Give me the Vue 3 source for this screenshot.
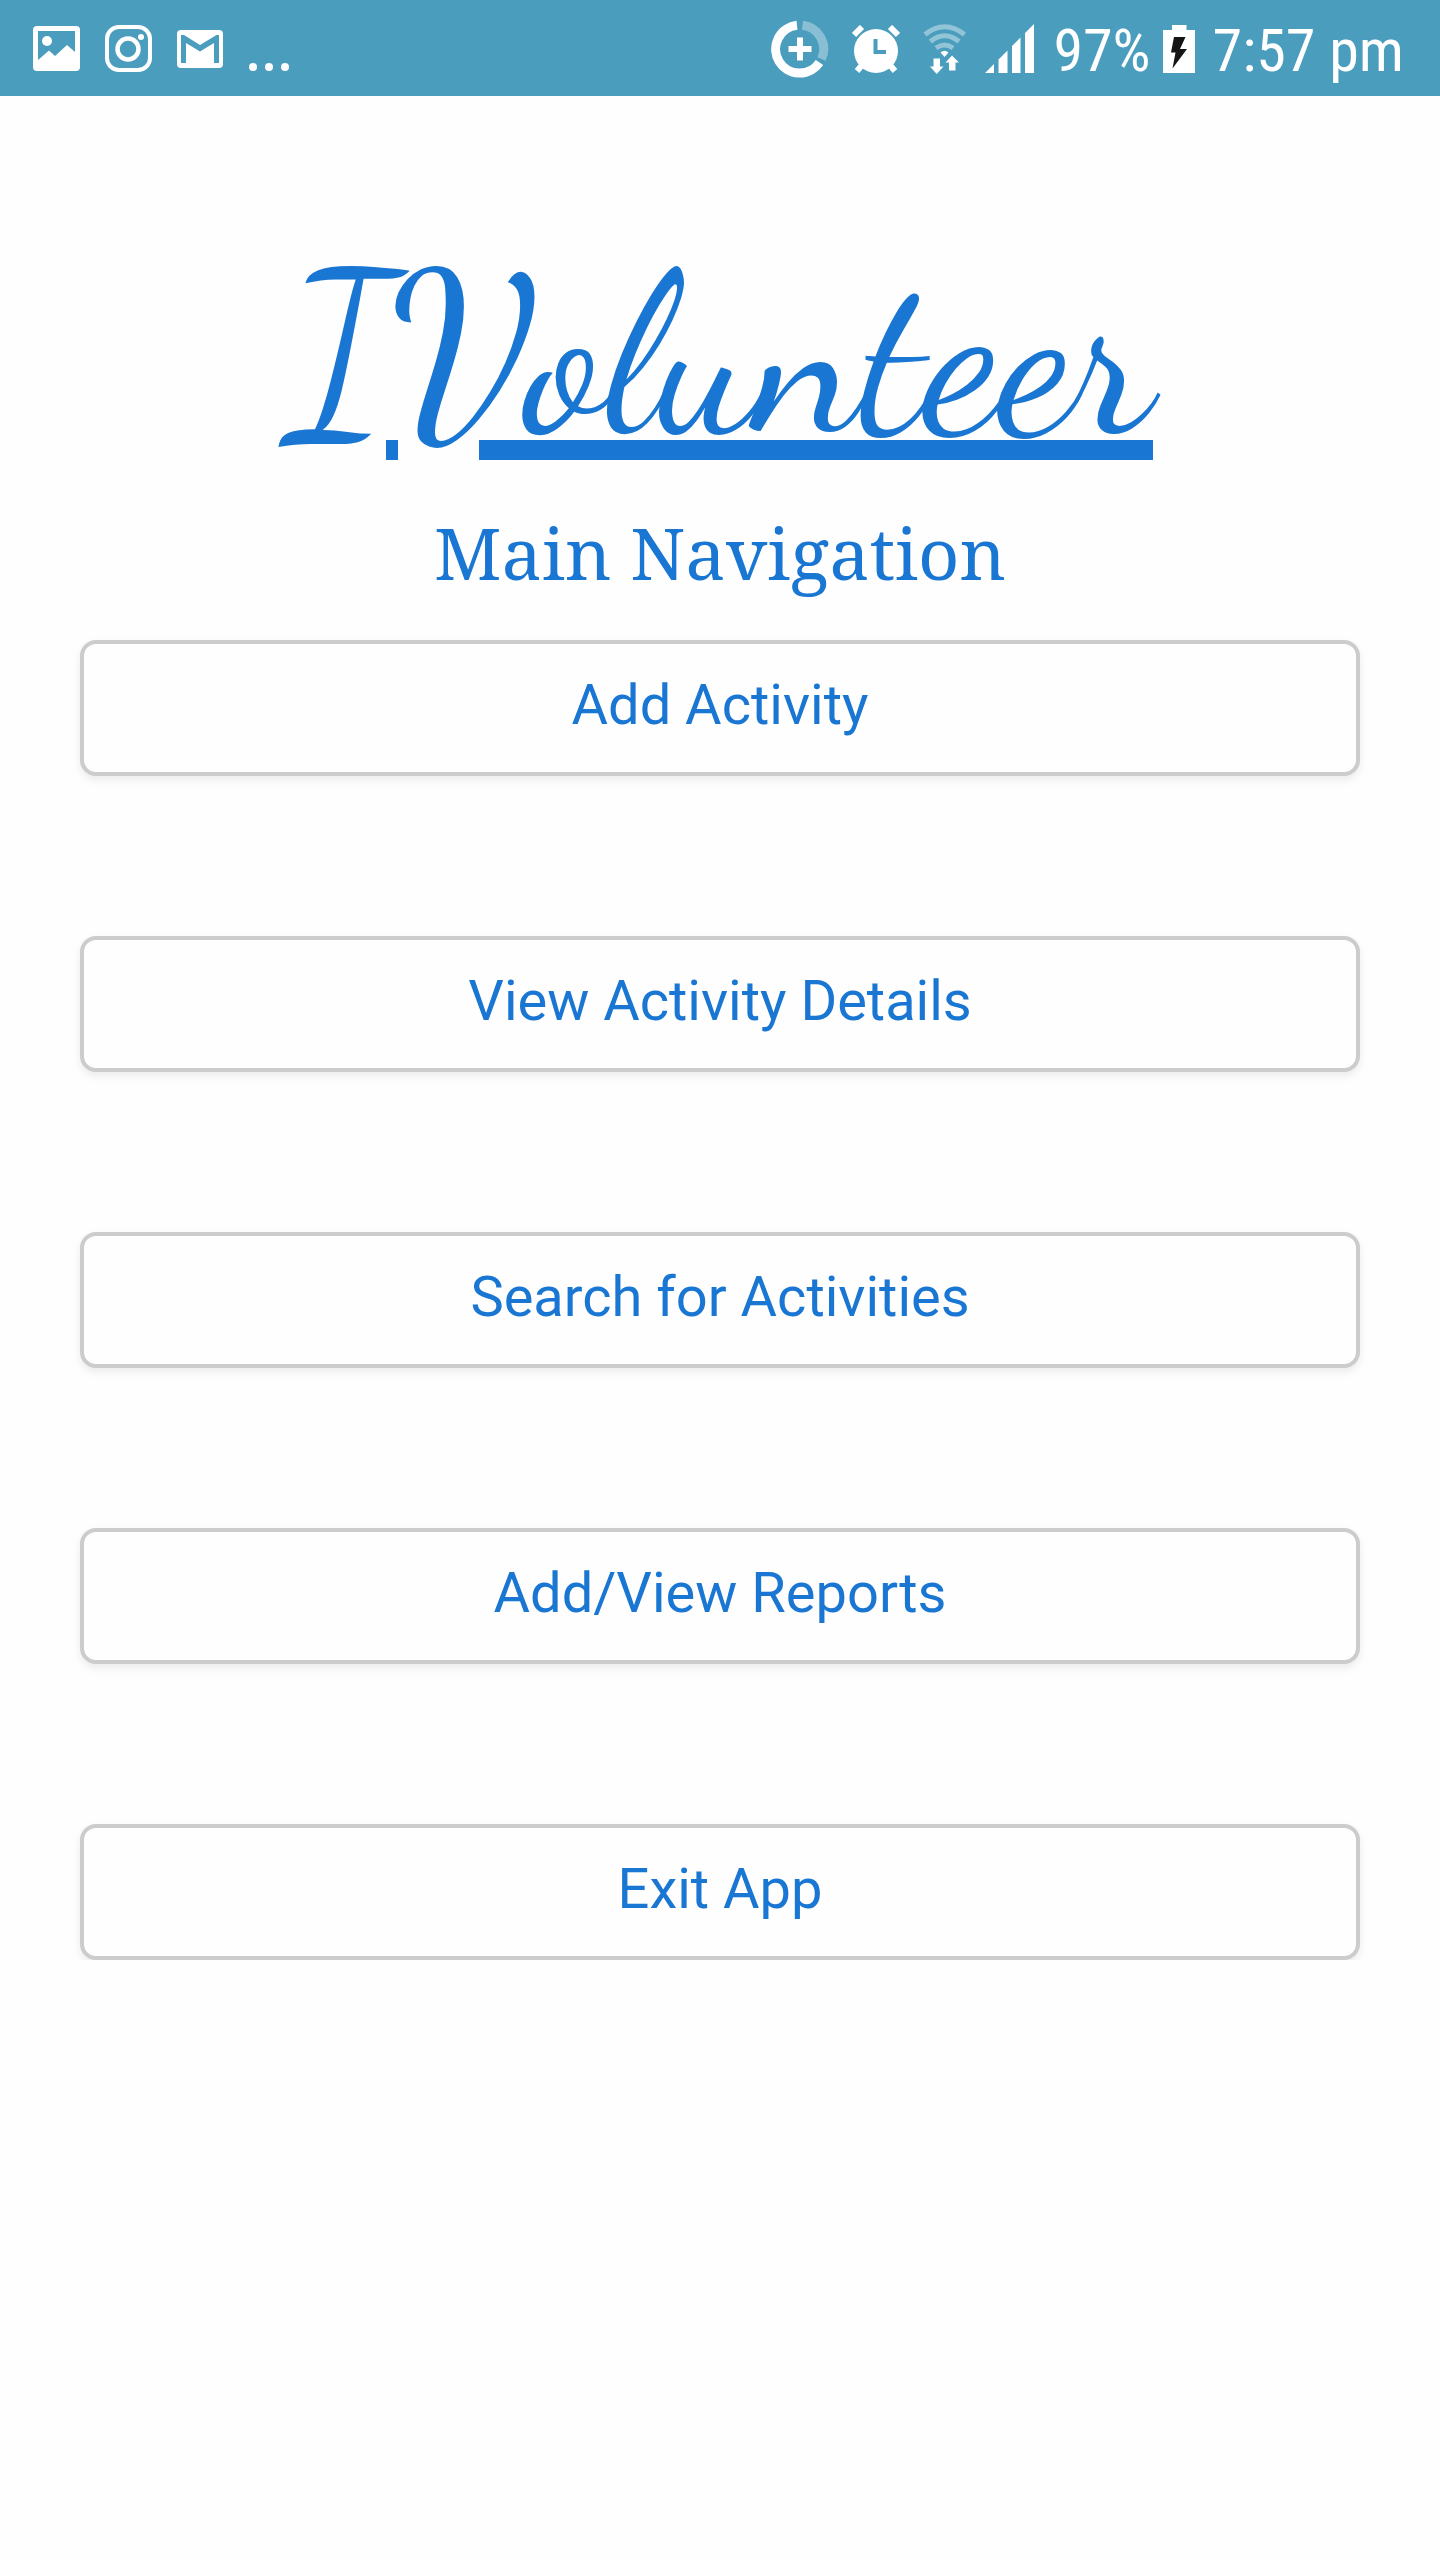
<script setup>
const actions = [
  'Add Activity',
  'View Activity Details',
  'Search for Activities',
  'Add/View Reports',
  'Exit App',
]
</script>

<template>
  <div class="screen">
    <header class="status">
      <div class="group notices">
        <svg class="icon" width="48" height="46" viewBox="0 0 48 46" aria-label="Picture saved">
          <path fill="#fff" fill-rule="evenodd" d="M4 0H43Q47 0 47 4V41Q47 45 43 45H4Q0 45 0 41V4Q0 0 4 0ZM5 5V34L16 24.5L22 30L34 19L42 26V5Z" />
          <circle cx="14" cy="15" r="5" fill="#fff" />
        </svg>
        <svg class="icon" width="48" height="48" viewBox="0 0 48 48" fill="none" stroke="#fff" aria-label="Instagram">
          <rect x="2" y="2" width="43" height="43" rx="12" stroke-width="4" />
          <circle cx="23" cy="24" r="10.5" stroke-width="4.5" />
          <circle cx="36" cy="12" r="3" fill="#fff" stroke="none" />
        </svg>
        <svg class="icon" width="48" height="38" viewBox="0 0 48 38" aria-label="Mail">
          <path fill="#fff" fill-rule="evenodd" d="M4 0H42Q46 0 46 4V34Q46 38 42 38H4Q0 38 0 34V4Q0 0 4 0ZM4 5V33H9V13L23 21.5L37 13V33H42V5H39.5L23 15L7 5Z" />
        </svg>
        <svg class="icon dots" width="40" height="8" viewBox="0 0 40 8" fill="#fff" aria-label="More notifications">
          <circle cx="4" cy="4" r="4" /><circle cx="20" cy="4" r="4" /><circle cx="36" cy="4" r="4" />
        </svg>
      </div>
      <div class="group system">
        <div class="group radios">
          <svg class="icon" width="58" height="58" viewBox="0 0 58 58" fill="none" stroke="#fff" stroke-width="9" aria-label="Data saver">
            <path d="M26 5.2A24 24 0 1 0 48.5 42.5" />
            <path d="M31.5 5.2A24 24 0 0 1 50.5 39" opacity=".35" />
            <path stroke-width="6" d="M17.5 29H40.5M29 17.5V40.5" />
          </svg>
          <svg class="icon" width="48" height="48" viewBox="0 0 48 48" aria-label="Alarm">
            <circle cx="24" cy="26" r="22" fill="#fff" />
            <path stroke="#fff" stroke-width="6" fill="none" d="M2 10L10 2M38 2L46 10M11 39L5 46M37 39L43 46" />
            <path stroke="#4a9dbd" stroke-width="4" fill="none" d="M23.5 14V27H34" />
          </svg>
          <svg class="icon" width="44" height="50" viewBox="0 0 44 50" fill="none" stroke="#fff" aria-label="Wi-Fi">
            <g opacity=".4" stroke-width="5">
              <path d="M2 10.5Q21.5 -5 41.5 10.5" />
              <path d="M7.5 17.5Q21.5 6 36 17.5" />
              <path d="M13 24Q21.5 18 30 24" />
            </g>
            <path fill="#fff" stroke="none" d="M17.5 28.5Q21.5 25 25.5 28.5L21.5 33ZM10.5 34.5H17V42.5H20.5L13.7 50L7 42.5H10.5ZM26 46.5H32.5V38.5H36L29 31.5L22.5 38.5H26Z" />
          </svg>
        </div>
        <svg class="icon" width="50" height="50" viewBox="0 0 50 50" fill="#fff" aria-label="Signal">
          <path d="M0 49L9 40V49ZM13.5 35.5L22.5 26.5V49H13.5ZM27 22L35.5 13.5V49H27ZM40 9L49 0V49H40Z" />
        </svg>
        <div class="group battery">
          <span class="text">97%</span>
          <svg class="icon" width="32" height="50" viewBox="0 0 32 50" aria-label="Charging">
            <path fill="#fff" d="M9 1H23.5V6H32V49H0V6H9Z" />
            <path fill="#151515" d="M11 13H22.5L17 25H24L9.5 44.5L12.5 28.5H8Z" />
          </svg>
        </div>
        <time class="text">7:57 pm</time>
      </div>
    </header>
    <main class="content">
      <div class="brand">
        <h1 class="name">IVolunteer</h1>
        <div class="underline"><span class="tick"></span><span class="line"></span></div>
      </div>
      <h2 class="heading">Main Navigation</h2>
      <nav class="menu" aria-label="Main Navigation">
        <button v-for="action in actions" :key="action" class="action" type="button">{{ action }}</button>
      </nav>
    </main>
  </div>
</template>

<style>
body {
  margin: 0;
  background: #fefefe;
}
</style>

<style scoped>
.screen {
  color: #1976d2;
  font-family: Roboto, sans-serif;
}
.status {
  height: 96px;
  padding: 2px 36px 0 33px;
  box-sizing: border-box;
  display: flex;
  justify-content: space-between;
  align-items: center;
  background: #4a9dbd;
  color: #fff;
  font: 400 60px/70px "Roboto Condensed", "Liberation Sans Narrow", Roboto, sans-serif;
}
.group {
  display: flex;
  align-items: center;
}
.icon {
  flex: none;
}
.notices {
  gap: 24px;
}
.dots {
  margin-top: 36px;
}
.system {
  gap: 18px;
}
.radios {
  gap: 23px;
}
.battery {
  gap: 12px;
}
.text {
  padding-top: 4px;
}
.content {
  padding: 178px 80px 0;
}
.brand {
  width: fit-content;
  margin: 0 auto;
}
.name {
  margin: 0;
  font: 400 224px/166px "Dancing Script", cursive;
}
.underline {
  display: flex;
  gap: 81px;
  height: 20px;
  padding-left: 99px;
}
.tick {
  width: 12px;
  background: currentColor;
}
.line {
  flex: 1;
  background: currentColor;
}
.heading {
  margin: 46px 0 42px;
  text-align: center;
  font: 400 72px/92px "Noto Serif", "Droid Serif", "DejaVu Serif Condensed", serif;
}
.menu {
  display: grid;
  gap: 160px;
}
.action {
  height: 136px;
  padding: 0 0 6px;
  border: 4px solid #ccc;
  border-radius: 16px;
  background: #fefefe;
  box-shadow: 0 4px 8px rgba(0, 0, 0, 0.08);
  color: inherit;
  font: 400 56px/66px Roboto, sans-serif;
}
</style>
